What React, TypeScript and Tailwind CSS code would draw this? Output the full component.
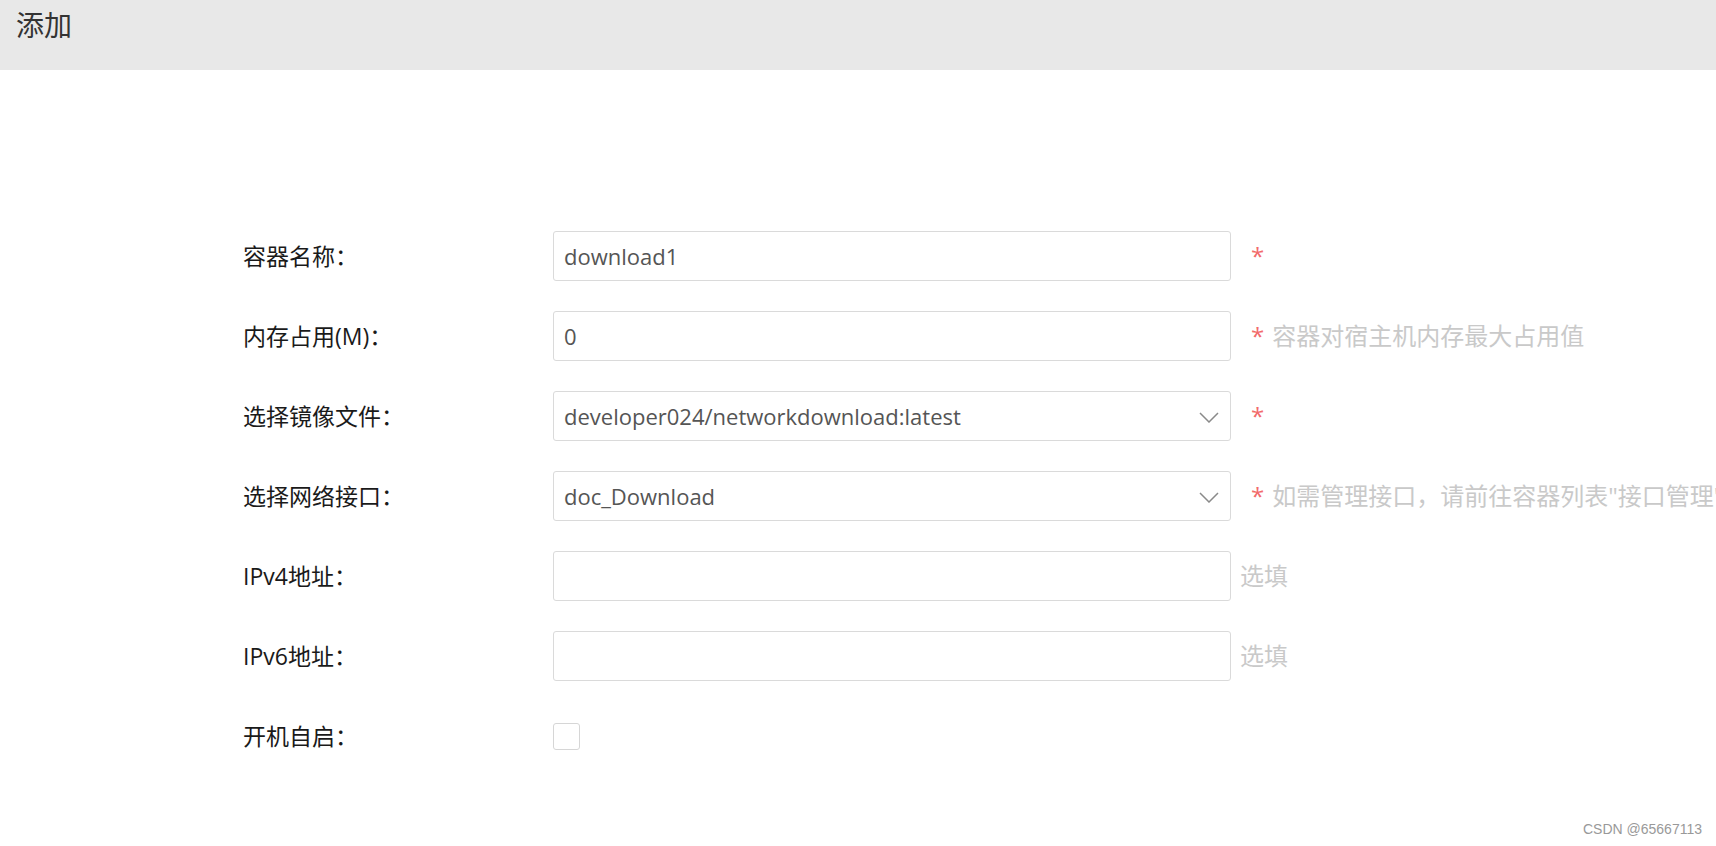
import React from 'react';

const font = { fontFamily: '"Open Sans", "Noto Sans CJK SC", sans-serif' };

const Chevron = () => (
  <svg width="20" height="11" viewBox="0 0 20 11" fill="none" className="absolute right-[11px] top-[20px]">
    <path d="M1 1l9 9 9-9" stroke="#8a8a8a" strokeWidth="1.5" />
  </svg>
);

const Row = ({ label, children }: { label: string; children: React.ReactNode }) => (
  <div className="flex items-center h-[50px] mb-[30px]">
    <div className="w-[310px] shrink-0 text-[23px] text-[#1a1a1a]">{label}</div>
    <div className="flex items-center">{children}</div>
  </div>
);

const Field = ({ value, select }: { value?: string; select?: boolean }) => (
  <div className="relative w-[678px] h-[50px] shrink-0 border border-[#dadada] rounded-[3px] bg-white flex items-center pl-[10px] text-[22px] text-[#555]">
    {value}
    {select && <Chevron />}
  </div>
);

const Star = ({ hint }: { hint?: string }) => (
  <div className="flex items-center ml-[20px] whitespace-nowrap text-[24px]">
    <span className="text-[#f26b6b]">*</span>
    {hint && <span className="ml-[8px] text-[#c9c9c9]">{hint}</span>}
  </div>
);

export default function App() {
  return (
    <div className="relative w-full h-[846px] overflow-hidden bg-white" style={font}>
      <header className="h-[70px] bg-[#e8e8e8] pl-[16px]">
        <h1 className="text-[28px] leading-[50px] text-[#333]">添加</h1>
      </header>
      <main className="pt-[161px] pl-[243px]">
        <Row label="容器名称：">
          <Field value="download1" />
          <Star />
        </Row>
        <Row label="内存占用(M)：">
          <Field value="0" />
          <Star hint="容器对宿主机内存最大占用值" />
        </Row>
        <Row label="选择镜像文件：">
          <Field value="developer024/networkdownload:latest" select />
          <Star />
        </Row>
        <Row label="选择网络接口：">
          <Field value="doc_Download" select />
          <Star hint={'如需管理接口，请前往容器列表"接口管理"页面进行操作'} />
        </Row>
        <Row label="IPv4地址：">
          <Field />
          <span className="ml-[9px] text-[24px] text-[#c9c9c9]">选填</span>
        </Row>
        <Row label="IPv6地址：">
          <Field />
          <span className="ml-[9px] text-[24px] text-[#c9c9c9]">选填</span>
        </Row>
        <Row label="开机自启：">
          <div className="w-[27px] h-[27px] border border-[#d6d6d6] rounded-[3px] bg-white" />
        </Row>
      </main>
      <div className="absolute right-[14px] bottom-[6px] text-[14px] text-[#999]" style={{ fontFamily: '"Liberation Sans", sans-serif' }}>
        CSDN @65667113
      </div>
    </div>
  );
}
